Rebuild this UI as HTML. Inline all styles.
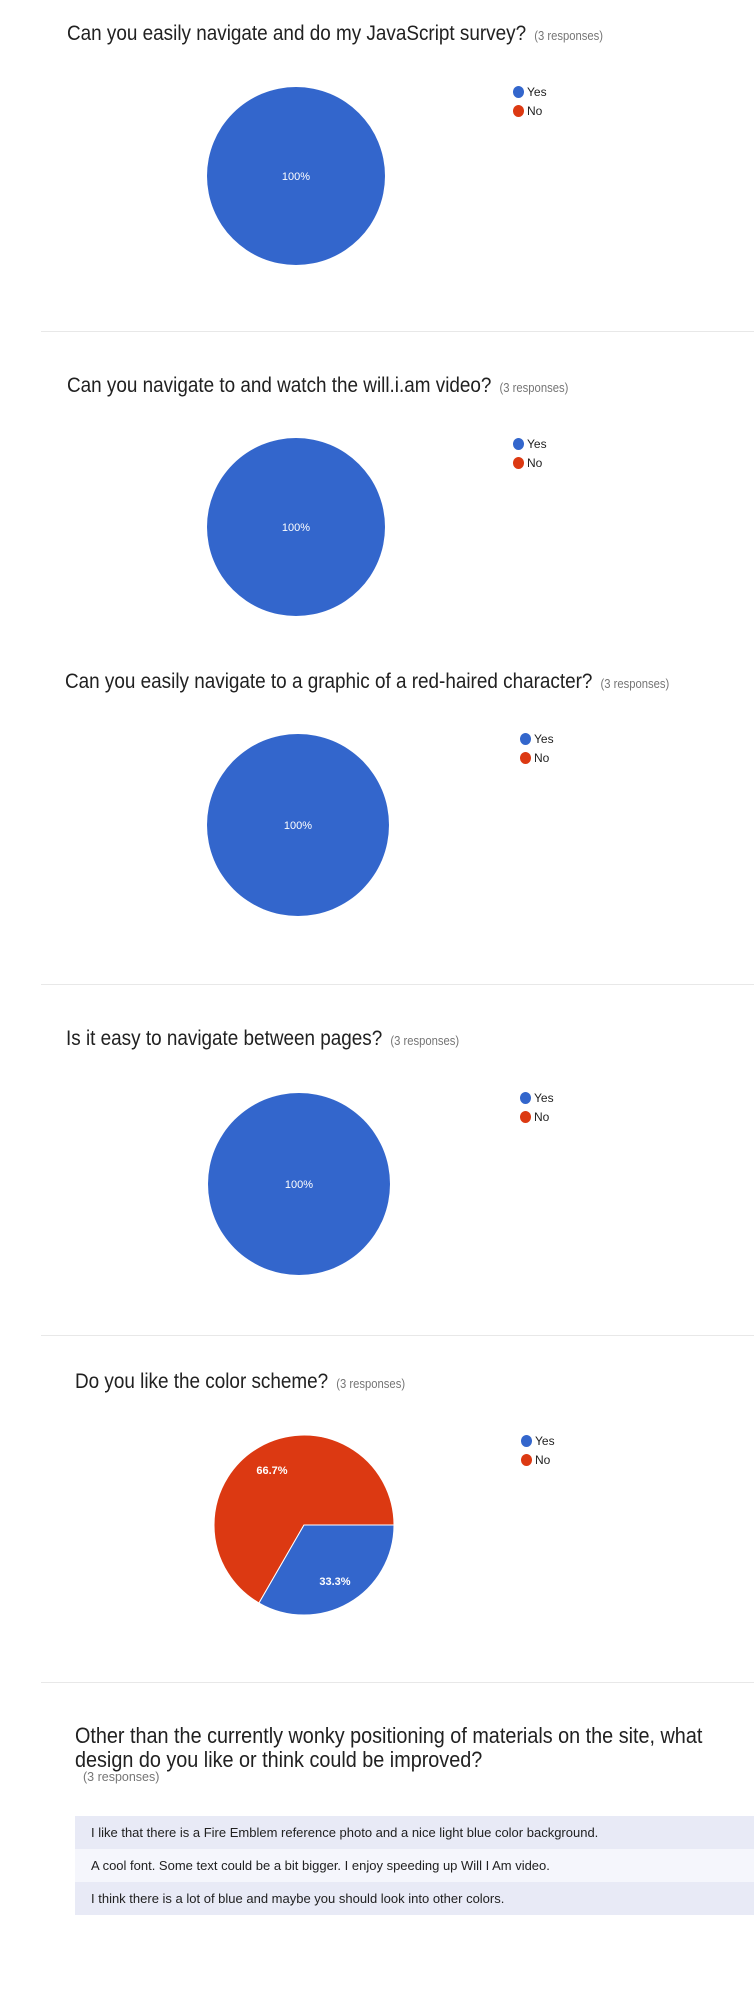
<!DOCTYPE html>
<html><head><meta charset="utf-8"><style>
html,body{margin:0;padding:0;background:#fff;width:754px;height:2000px;overflow:hidden}
body{position:relative;font-family:"Liberation Sans",Arial,sans-serif;color:#212121}
.t{position:absolute;font-size:21px;line-height:21px;white-space:nowrap;transform-origin:0 0;transform:scaleX(.9)}
.t span{font-size:12.5px;color:#757575;margin-left:9px}
.hr{position:absolute;left:41px;right:0;height:1px;background:#e8e8e8}
.lg{position:absolute;font-size:12px;line-height:14px;color:#222}
.lg div{position:relative;padding-left:14px;height:19px}
.lg i{position:absolute;left:0;top:1px;width:11px;height:12px;border-radius:50%}
.b{background:#3366cc}.r{background:#dc3912}
svg{position:absolute;left:0;top:0}
.row{position:absolute;left:75px;right:0;height:33px;font-size:13px;line-height:33px;padding-left:16px;color:#212121}
</style></head><body>

<div class="t" style="left:67px;top:23px">Can you easily navigate and do my JavaScript survey?<span>(3 responses)</span></div>
<div class="lg" style="left:513px;top:85px"><div><i class="b"></i>Yes</div><div><i class="r"></i>No</div></div>
<div class="hr" style="top:331px"></div>

<div class="t" style="left:67px;top:375px">Can you navigate to and watch the will.i.am video?<span>(3 responses)</span></div>
<div class="lg" style="left:513px;top:437px"><div><i class="b"></i>Yes</div><div><i class="r"></i>No</div></div>

<div class="t" style="left:65px;top:671px">Can you easily navigate to a graphic of a red-haired character?<span>(3 responses)</span></div>
<div class="lg" style="left:520px;top:732px"><div><i class="b"></i>Yes</div><div><i class="r"></i>No</div></div>
<div class="hr" style="top:984px"></div>

<div class="t" style="left:66px;top:1028px">Is it easy to navigate between pages?<span>(3 responses)</span></div>
<div class="lg" style="left:520px;top:1091px"><div><i class="b"></i>Yes</div><div><i class="r"></i>No</div></div>
<div class="hr" style="top:1335px"></div>

<div class="t" style="left:75px;top:1371px">Do you like the color scheme?<span>(3 responses)</span></div>
<div class="lg" style="left:521px;top:1434px"><div><i class="b"></i>Yes</div><div><i class="r"></i>No</div></div>
<div class="hr" style="top:1682px"></div>

<div class="t" style="left:75px;top:1724px;font-size:22px;line-height:24px;transform:scaleX(.9)">Other than the currently wonky positioning of materials on the site, what<br>design do you like or think could be improved?</div>
<div style="position:absolute;left:83px;top:1770px;font-size:12.5px;color:#757575">(3 responses)</div>

<div class="row" style="top:1816px;background:#e8eaf6">I like that there is a Fire Emblem reference photo and a nice light blue color background.</div>
<div class="row" style="top:1849px;background:#f5f6fc">A cool font. Some text could be a bit bigger. I enjoy speeding up Will I Am video.</div>
<div class="row" style="top:1882px;background:#e8eaf6">I think there is a lot of blue and maybe you should look into other colors.</div>

<svg width="754" height="2000" font-family="Liberation Sans, Arial, sans-serif">
<circle cx="296" cy="176" r="89" fill="#3366cc"/>
<text x="296" y="180" fill="#fff" font-size="11" text-anchor="middle">100%</text>
<circle cx="296" cy="527" r="89" fill="#3366cc"/>
<text x="296" y="531" fill="#fff" font-size="11" text-anchor="middle">100%</text>
<circle cx="298" cy="825" r="91" fill="#3366cc"/>
<text x="298" y="829" fill="#fff" font-size="11" text-anchor="middle">100%</text>
<circle cx="299" cy="1184" r="91" fill="#3366cc"/>
<text x="299" y="1188" fill="#fff" font-size="11" text-anchor="middle">100%</text>
<path d="M304 1525 L394 1525 A90 90 0 1 0 259 1603 Z" fill="#dc3912" stroke="#fff" stroke-width="1"/>
<path d="M304 1525 L259 1603 A90 90 0 0 0 394 1525 Z" fill="#3366cc" stroke="#fff" stroke-width="1"/>
<text x="272" y="1474" fill="#fff" font-size="11" font-weight="bold" text-anchor="middle">66.7%</text>
<text x="335" y="1585" fill="#fff" font-size="11" font-weight="bold" text-anchor="middle">33.3%</text>
</svg>
</body></html>
